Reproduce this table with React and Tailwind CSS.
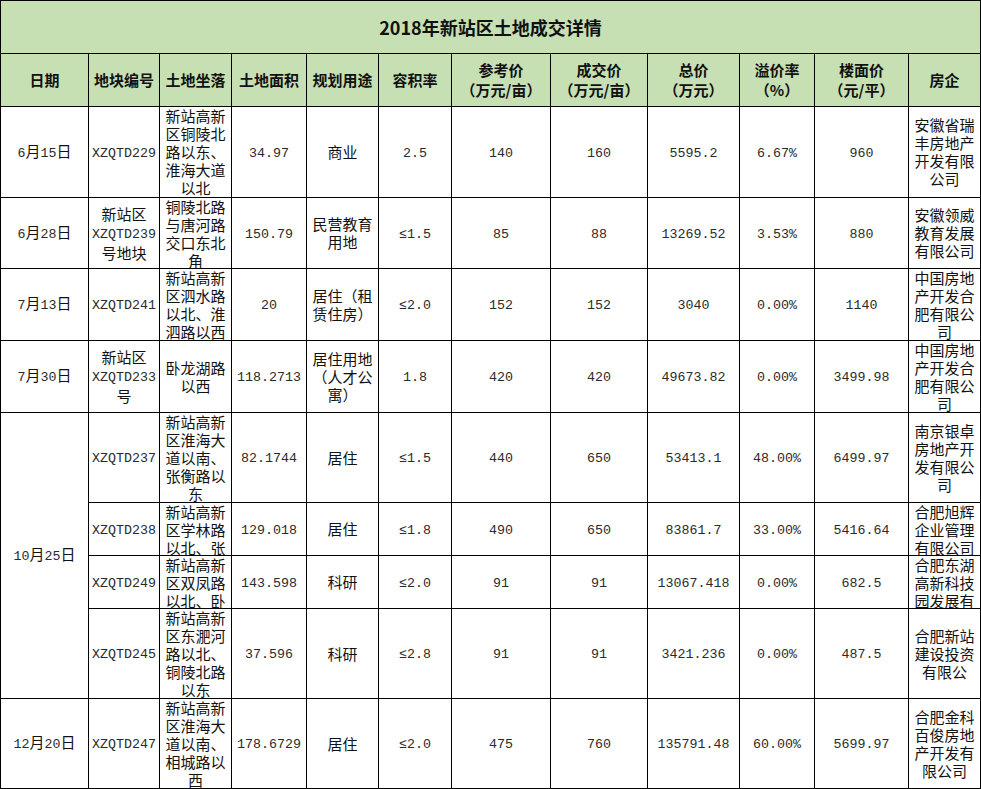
import React from 'react';

const heads = [
  ['日期'],
  ['地块编号'],
  ['土地坐落'],
  ['土地面积'],
  ['规划用途'],
  ['容积率'],
  ['参考价', '（万元/亩）'],
  ['成交价', '（万元/亩）'],
  ['总价', '（万元）'],
  ['溢价率', '（%）'],
  ['楼面价', '（元/平）'],
  ['房企'],
];

// each row: date (null when covered by rowspan), then 11 cells; a cell is an array of lines
const rows = [
  [['6月15日'], ['XZQTD229'], ['新站高新', '区铜陵北', '路以东、', '淮海大道', '以北'], ['34.97'], ['商业'], ['2.5'], ['140'], ['160'], ['5595.2'], ['6.67%'], ['960'], ['安徽省瑞', '丰房地产', '开发有限', '公司']],
  [['6月28日'], ['新站区', 'XZQTD239', '号地块'], ['铜陵北路', '与唐河路', '交口东北', '角'], ['150.79'], ['民营教育', '用地'], ['≤1.5'], ['85'], ['88'], ['13269.52'], ['3.53%'], ['880'], ['安徽领威', '教育发展', '有限公司']],
  [['7月13日'], ['XZQTD241'], ['新站高新', '区泗水路', '以北、淮', '泗路以西'], ['20'], ['居住（租', '赁住房）'], ['≤2.0'], ['152'], ['152'], ['3040'], ['0.00%'], ['1140'], ['中国房地', '产开发合', '肥有限公', '司']],
  [['7月30日'], ['新站区', 'XZQTD233', '号'], ['卧龙湖路', '以西'], ['118.2713'], ['居住用地', '（人才公', '寓）'], ['1.8'], ['420'], ['420'], ['49673.82'], ['0.00%'], ['3499.98'], ['中国房地', '产开发合', '肥有限公', '司']],
  [['10月25日'], ['XZQTD237'], ['新站高新', '区淮海大', '道以南、', '张衡路以', '东'], ['82.1744'], ['居住'], ['≤1.5'], ['440'], ['650'], ['53413.1'], ['48.00%'], ['6499.97'], ['南京银卓', '房地产开', '发有限公', '司']],
  [null, ['XZQTD238'], ['新站高新', '区学林路', '以北、张'], ['129.018'], ['居住'], ['≤1.8'], ['490'], ['650'], ['83861.7'], ['33.00%'], ['5416.64'], ['合肥旭辉', '企业管理', '有限公司']],
  [null, ['XZQTD249'], ['新站高新', '区双凤路', '以北、卧'], ['143.598'], ['科研'], ['≤2.0'], ['91'], ['91'], ['13067.418'], ['0.00%'], ['682.5'], ['合肥东湖', '高新科技', '园发展有']],
  [null, ['XZQTD245'], ['新站高新', '区东淝河', '路以北、', '铜陵北路', '以东'], ['37.596'], ['科研'], ['≤2.8'], ['91'], ['91'], ['3421.236'], ['0.00%'], ['487.5'], ['合肥新站', '建设投资', '有限公']],
  [['12月20日'], ['XZQTD247'], ['新站高新', '区淮海大', '道以南、', '相城路以', '西'], ['178.6729'], ['居住'], ['≤2.0'], ['475'], ['760'], ['135791.48'], ['60.00%'], ['5699.97'], ['合肥金科', '百俊房地', '产开发有', '限公司']],
];

// ascii runs get the narrow serif mono face, the rest stays on the CJK face
function Mixed({ text }) {
  const parts = text.match(/[\x20-\x7e≤]+|[^\x20-\x7e≤]+/g) || [];
  return parts.map((p, i) =>
    /^[\x20-\x7e≤]/.test(p) ? (
      <span key={i} className="font-['Liberation_Mono',monospace] text-[13.3px] text-[#2a2a2a]">{p}</span>
    ) : (
      <span key={i}>{p}</span>
    )
  );
}

function Cell({ lines, className = '' }) {
  return (
    <div className={`bg-white flex flex-col items-center justify-center-safe overflow-hidden text-center leading-[18px] text-[15px] text-[#111] ${className}`}>
      {lines.map((l, i) => (
        <div key={i} className="whitespace-nowrap">
          <Mixed text={l} />
        </div>
      ))}
    </div>
  );
}

export default function App() {
  return (
    <div className="w-[981px] h-[789px] bg-white font-['Noto_Sans_CJK_SC',sans-serif]">
      <div className="grid bg-black gap-px p-px grid-cols-[87px_70px_71px_74px_71px_72px_98px_96px_91px_74px_93px_71px] grid-rows-[52px_52px_90px_70px_71px_71px_89px_52px_52px_89px_89px]">
        <div className="col-span-12 bg-[#c6e0b4] flex items-center justify-center text-[18px] font-bold text-[#111]">
          2018年新站区土地成交详情
        </div>
        {heads.map((h, i) => (
          <div key={i} className="bg-[#c6e0b4] flex flex-col items-center justify-center text-[15px] leading-[20px] font-bold text-[#111]">
            {h.map((l, j) => (
              <div key={j} className="whitespace-nowrap">{l}</div>
            ))}
          </div>
        ))}
        {rows.map((r, ri) =>
          r.map((c, ci) => {
            if (c === null) return null;
            const span = ri === 4 && ci === 0 ? 'row-span-4' : '';
            return <Cell key={`${ri}-${ci}`} lines={c} className={span} />;
          })
        )}
      </div>
    </div>
  );
}
